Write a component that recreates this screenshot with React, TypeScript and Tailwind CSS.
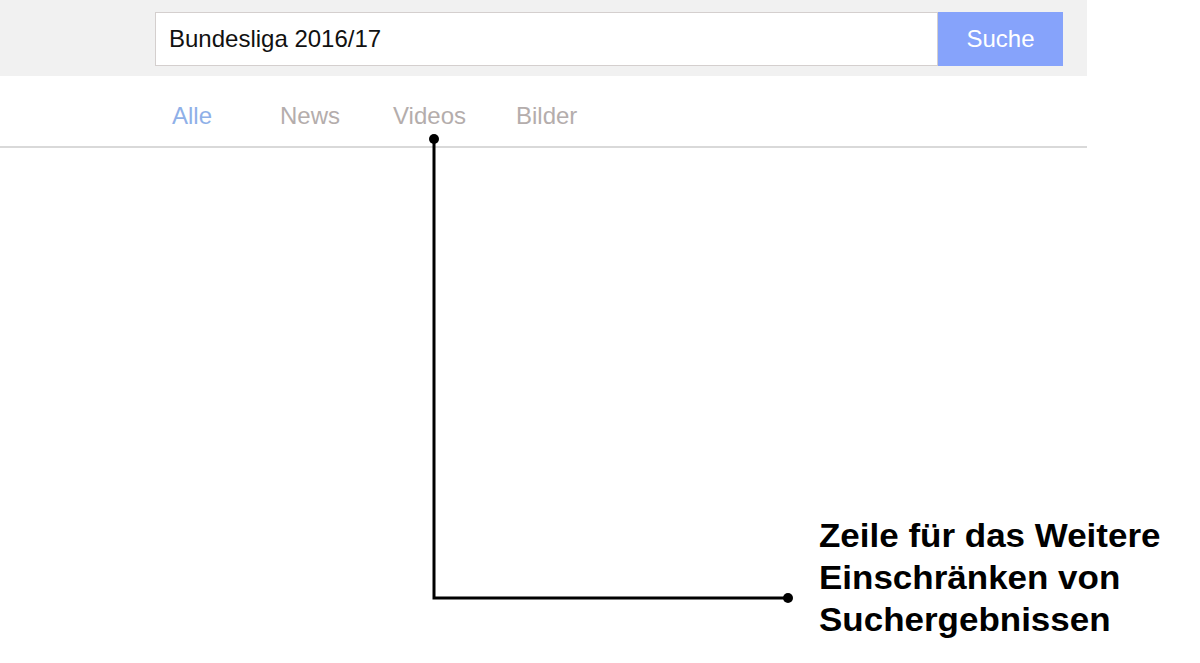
import React from 'react';

const tabs = [
  { label: 'Alle', active: true, ml: 'ml-[172px]' },
  { label: 'News', active: false, ml: 'ml-[68px]' },
  { label: 'Videos', active: false, ml: 'ml-[53px]' },
  { label: 'Bilder', active: false, ml: 'ml-[50px]' },
];

function SearchBar() {
  return (
    <div className="flex h-[76px] w-[1087px] items-start bg-[#f1f1f1] pt-[12px] pl-[155px]">
      <div className="flex h-[54px] w-[783px] items-center border border-[#d4cfce] bg-white pl-[13px]">
        <span className="text-[24px] leading-[28px] text-[#111]">Bundesliga 2016/17</span>
      </div>
      <button className="flex h-[54px] w-[125px] items-center justify-center bg-[#86a3fb] text-[24px] leading-[28px] text-white">
        Suche
      </button>
    </div>
  );
}

function FilterTabs() {
  return (
    <div className="flex h-[72px] w-[1087px] items-start border-b-2 border-[#d9d9d9] pt-[26px]">
      {tabs.map((tab) => (
        <span
          key={tab.label}
          className={`${tab.ml} text-[24px] leading-[28px] ${
            tab.active ? 'text-[#8fb0e8]' : 'text-[#b4adac]'
          }`}
        >
          {tab.label}
        </span>
      ))}
    </div>
  );
}

export default function App() {
  return (
    <div className="relative h-[663px] w-[1200px] overflow-hidden bg-white font-['Liberation_Sans',Arial,sans-serif]">
      <SearchBar />
      <FilterTabs />

      {/* annotation connector */}
      <svg className="pointer-events-none absolute top-0 left-0" width="1200" height="663">
        <polyline points="434,139 434,598 788,598" fill="none" stroke="#000" strokeWidth="3" />
        <circle cx="434" cy="139" r="5" fill="#000" />
        <circle cx="788" cy="598" r="5" fill="#000" />
      </svg>

      <div className="absolute top-[515px] left-[819px] origin-left scale-x-[1.06] text-[33px] leading-[42px] font-bold text-black">
        <div>Zeile für das Weitere</div>
        <div>Einschränken von</div>
        <div>Suchergebnissen</div>
      </div>
    </div>
  );
}
